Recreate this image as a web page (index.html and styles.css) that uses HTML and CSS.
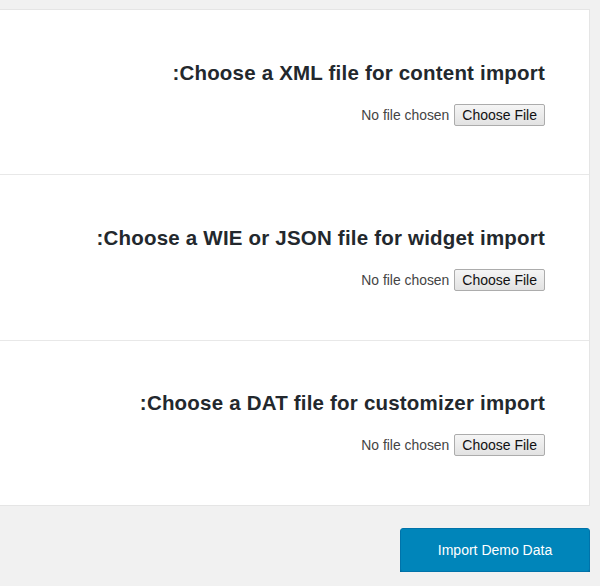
FILE: index.html
```html
<!DOCTYPE html>
<html lang="en">
<head>
<meta charset="utf-8">
<title>Import Demo Data</title>
<link rel="stylesheet" href="styles.css">
</head>
<body>
<div class="page" dir="rtl">
  <div class="panel">
    <section class="import-row">
      <h2 class="import-title">Choose a XML file for content import:</h2>
      <input class="file-input" type="file" name="content_file">
    </section>
    <section class="import-row import-row--mid">
      <h2 class="import-title">Choose a WIE or JSON file for widget import:</h2>
      <input class="file-input" type="file" name="widget_file">
    </section>
    <section class="import-row import-row--last">
      <h2 class="import-title">Choose a DAT file for customizer import:</h2>
      <input class="file-input" type="file" name="customizer_file">
    </section>
  </div>
  <div class="actions">
    <button class="import-btn" type="button">Import Demo Data</button>
  </div>
</div>
</body>
</html>
```
FILE: styles.css
```css
html, body {
  margin: 0;
  padding: 0;
}

body {
  background: #f1f1f1;
  font-family: "Liberation Sans", Arial, sans-serif;
  color: #444;
}

.page {
  padding: 9px 10px 0 0;
}

.panel {
  background: #fff;
  border: 1px solid #e5e5e5;
  border-left: 0;
}

.import-row {
  display: flex;
  flex-direction: column;
  align-items: flex-start;
  padding: 51px 44px 48px 44px;
  border-bottom: 1px solid #e8e8e8;
}

.import-row--mid {
  padding-bottom: 49px;
}

.import-row--last {
  padding-top: 50px;
  padding-bottom: 49px;
  border-bottom: 0;
}

.import-title {
  margin: 0 0 19px 0;
  font-size: 20.5px;
  line-height: 24px;
  font-weight: bold;
  letter-spacing: 0.2px;
  color: #23282d;
}

.file-input {
  height: 22px;
  margin: 0;
  padding: 0;
  font-family: "Liberation Sans", Arial, sans-serif;
  font-size: 13.9px;
  color: #444;
}

.file-input::file-selector-button {
  height: 22px;
  margin: 0;
  margin-inline-end: 5px;
  padding: 0 7px;
  font-family: "Liberation Sans", Arial, sans-serif;
  font-size: 14px;
  color: #111;
  background: linear-gradient(#f5f5f5, #e2e2e2);
  border: 1px solid #acacac;
  border-radius: 2px;
}

.actions {
  margin-top: 22px;
  display: flex;
}

.import-btn {
  width: 190px;
  height: 44px;
  margin: 0;
  padding: 0;
  background: #0085ba;
  border: 1px solid #0073aa;
  border-radius: 3px;
  box-shadow: 0 3px 0 #006799;
  color: #fff;
  font-family: "Liberation Sans", Arial, sans-serif;
  font-size: 14px;
  cursor: pointer;
}
```
